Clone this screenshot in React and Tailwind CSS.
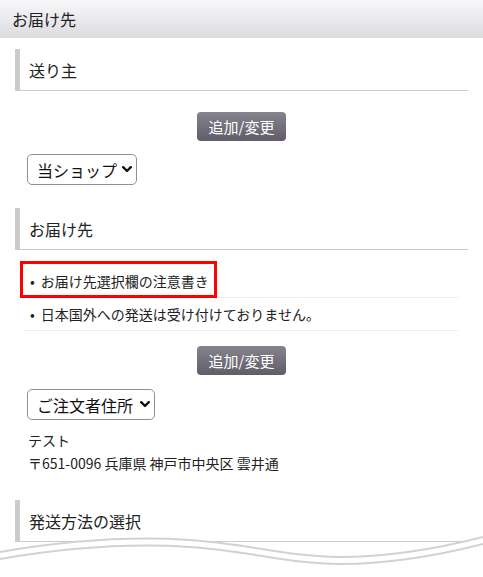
const jp = { fontFamily: '"Noto Sans CJK JP", "Noto Sans", sans-serif' };

const SectionHeading = ({ title, className = "" }) => (
    <div
        className={`mx-[15px] h-[42px] flex items-center border-l-[5px] border-b border-[#cccccc] pl-[9px] text-[16px] text-[#222] ${className}`}
    >
        {title}
    </div>
);

const ChangeButton = ({ className = "" }) => (
    <div className={`flex justify-center ${className}`}>
        <button className="h-[29px] w-[89px] rounded-[4px] bg-gradient-to-b from-[#86848f] to-[#605d68] text-[15px] leading-none text-white">
            追加/変更
        </button>
    </div>
);

const FakeSelect = ({ label, width, className = "" }) => (
    <div
        className={`ml-[27px] h-[31px] flex items-center justify-between rounded-[5px] border border-[#8f8f8f] pl-[9px] pr-[4px] text-[16px] text-[#111] ${width} ${className}`}
    >
        <span className="shrink-0 whitespace-nowrap">{label}</span>
        <svg className="shrink-0" width="10" height="7" viewBox="0 0 10 7">
            <path d="M1.2 1.2 L5 5 L8.8 1.2" fill="none" stroke="#111" strokeWidth="2.4" strokeLinecap="round" strokeLinejoin="round" />
        </svg>
    </div>
);

const Wave = () => (
    <svg className="absolute left-0 bottom-0" width="483" height="47" viewBox="0 0 483 47">
        <path d="M0 22 C70 10 130 6 190 10 S290 27 340 27 S440 18 483 7 L483 47 L0 47 Z" fill="#ffffff" />
        <path d="M0 22 C70 10 130 6 190 10 S290 27 340 27 S440 18 483 7" fill="none" stroke="#d2d2d2" strokeWidth="2" />
        <path d="M0 29 C70 17 130 13 190 17 S290 34 340 34 S440 25 483 14" fill="none" stroke="#d2d2d2" strokeWidth="2" />
    </svg>
);

export default function App() {
    return (
        <div className="relative h-[577px] w-[483px] overflow-hidden bg-white leading-none" style={jp}>
            <div className="h-[38px] flex items-center pl-[12px] bg-gradient-to-b from-[#f8f8fa] to-[#dcdce1] text-[16px] text-[#222]">
                お届け先
            </div>

            <SectionHeading title="送り主" className="mt-[11px]" />
            <ChangeButton className="mt-[21px]" />
            <FakeSelect label="当ショップ" width="w-[110px]" className="mt-[13px]" />

            <SectionHeading title="お届け先" className="mt-[23px]" />

            <ul className="mt-[14px] ml-[25px] w-[433px] text-[14px] text-[#222]">
                <li className="relative h-[34px] flex items-center pt-[1px] pl-[5px] border-b border-dotted border-[#d8d8d8]">
                    <span className="mr-[6px]">•</span>お届け先選択欄の注意書き
                    <span className="absolute -left-[5px] -top-[3px] w-[197px] h-[37px] border-[3px] border-[#ff0000]" />
                </li>
                <li className="h-[33px] flex items-center pl-[5px] border-b border-dotted border-[#d8d8d8]">
                    <span className="mr-[6px]">•</span>日本国外への発送は受け付けておりません。
                </li>
            </ul>

            <ChangeButton className="mt-[15px]" />
            <FakeSelect label="ご注文者住所" width="w-[128px]" className="mt-[14px]" />

            <div className="mt-[9px] ml-[28px] text-[14px] leading-[23px] text-[#222]">
                <p>テスト</p>
                <p>〒651-0096 兵庫県 神戸市中央区 雲井通</p>
            </div>

            <SectionHeading title="発送方法の選択" className="mt-[25px]" />

            <Wave />
        </div>
    );
}
